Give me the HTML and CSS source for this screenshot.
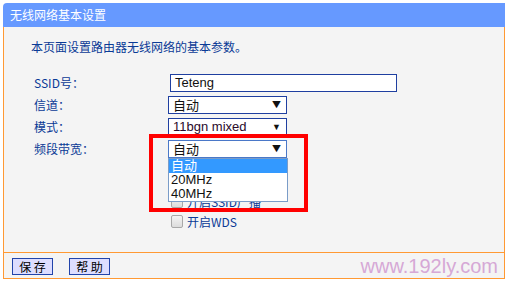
FILE: index.html
```html
<!DOCTYPE html>
<html>
<head>
<meta charset="utf-8">
<link rel="stylesheet" href="styles.css">
</head>
<body>
<div class="panel">
  <div class="title">无线网络基本设置</div>
  <div class="content">
    <p class="intro">本页面设置路由器无线网络的基本参数。</p>
    <div class="form">
      <div class="label">SSID号：</div>
      <div class="field"><div class="input">Teteng</div></div>
      <div class="label">信道：</div>
      <div class="field"><div class="select">自动<span class="arrow">▼</span></div></div>
      <div class="label">模式：</div>
      <div class="field"><div class="select mode">11bgn mixed<span class="arrow">▼</span></div></div>
      <div class="label">频段带宽：</div>
      <div class="field">
        <div class="select open">自动<span class="arrow">▼</span>
          <div class="list">
            <div class="opt sel">自动</div>
            <div class="opt">20MHz</div>
            <div class="opt">40MHz</div>
          </div>
          <div class="mark"></div>
        </div>
      </div>
    </div>
    <div class="checks">
      <div class="check"><span class="box"></span>开启SSID广播</div>
      <div class="check"><span class="box"></span>开启WDS</div>
    </div>
  </div>
  <div class="footer">
    <div class="btn">保 存</div>
    <div class="btn">帮 助</div>
    <div class="wm">www.192ly.com</div>
  </div>
</div>
</body>
</html>
```

FILE: styles.css
```css
* { box-sizing: border-box; }
html, body { margin: 0; padding: 0; background: #ffffff; }
body { font-family: "Liberation Sans", "Noto Sans CJK SC", sans-serif; }
.panel { margin: 3px 0 0 3px; width: 502px; }
.title {
  height: 24px;
  background: #6699ff;
  border-top-left-radius: 4px;
  color: #ffffff;
  font-family: "Noto Sans CJK SC", sans-serif;
  font-size: 12px;
  line-height: 24px;
  padding-left: 7px;
}
.content {
  height: 225px;
  background: #f4f4f4;
  border-left: 1px solid #ff9933;
  border-right: 1px solid #ff9933;
  padding: 13px 0 0 30px;
}
.intro {
  margin: 0 0 0 -3px;
  color: #0a3a96;
  font-family: "Noto Sans CJK SC", sans-serif;
  font-size: 12px;
  line-height: 14px;
}
.form {
  display: grid;
  grid-template-columns: 134px 240px;
  grid-auto-rows: 18px;
  row-gap: 4px;
  margin-top: 20px;
}
.label {
  color: #0a3a96;
  font-family: "Noto Sans CJK SC", sans-serif;
  font-size: 12px;
  line-height: 18px;
}
.field { position: relative; }
.input {
  margin-left: 2px;
  width: 227px;
  height: 18px;
  background: #fff;
  border: 1px solid #1f3fa0;
  font-size: 13px;
  line-height: 16px;
  padding-left: 4px;
  color: #111;
}
.select {
  position: relative;
  width: 119px;
  height: 18px;
  background: #fff;
  border: 1px solid #1f3fa0;
  font-family: "Noto Sans CJK SC", sans-serif;
  font-size: 13px;
  line-height: 16px;
  padding-left: 4px;
  color: #111;
}
.select.mode { font-family: "Liberation Sans", sans-serif; color: #2a0a2a; }
.select.open { border-color: #4a78c8; }
.arrow {
  position: absolute;
  right: 5px;
  top: 0;
  font-size: 9px;
  line-height: 16px;
  color: #111;
}
.list {
  position: absolute;
  left: -1px;
  top: 17px;
  width: 120px;
  background: #fff;
  border: 1px solid #7a9cc8;
  z-index: 2;
}
.opt {
  height: 14px;
  line-height: 14px;
  font-size: 13px;
  padding-left: 2px;
  color: #111;
  font-family: "Liberation Sans", "Noto Sans CJK SC", sans-serif;
}
.opt.sel { background: #3399ff; color: #fff; }
.mark {
  position: absolute;
  left: -20px;
  top: -7px;
  width: 159px;
  height: 78px;
  border: 4px solid #ff0000;
  z-index: 3;
}
.checks { margin-top: 33px; padding-left: 137px; }
.check {
  display: flex;
  align-items: center;
  height: 20px;
  color: #0a3a96;
  font-family: "Noto Sans CJK SC", sans-serif;
  font-size: 12px;
}
.box {
  width: 12px;
  height: 13px;
  border: 1px solid #a8a8a8;
  border-radius: 2px;
  background: linear-gradient(#f4f4f4, #dcdcdc);
  margin-right: 4px;
}
.footer {
  height: 27px;
  border: 1px solid #ff9933;
  background: #f4f4f4;
  display: flex;
  align-items: center;
  padding-left: 8px;
  padding-top: 1px;
}
.btn {
  width: 41px;
  height: 17px;
  background: #ddddff;
  border: 1px solid #2244aa;
  font-family: "Noto Sans CJK SC", sans-serif;
  font-size: 12px;
  line-height: 15px;
  text-align: center;
  color: #000;
  margin-right: 16px;
}
.wm {
  margin-left: auto;
  margin-right: 6px;
  font-family: "Liberation Sans", sans-serif;
  font-size: 20px;
  color: #d6a8d6;
  line-height: 20px;
}
```
